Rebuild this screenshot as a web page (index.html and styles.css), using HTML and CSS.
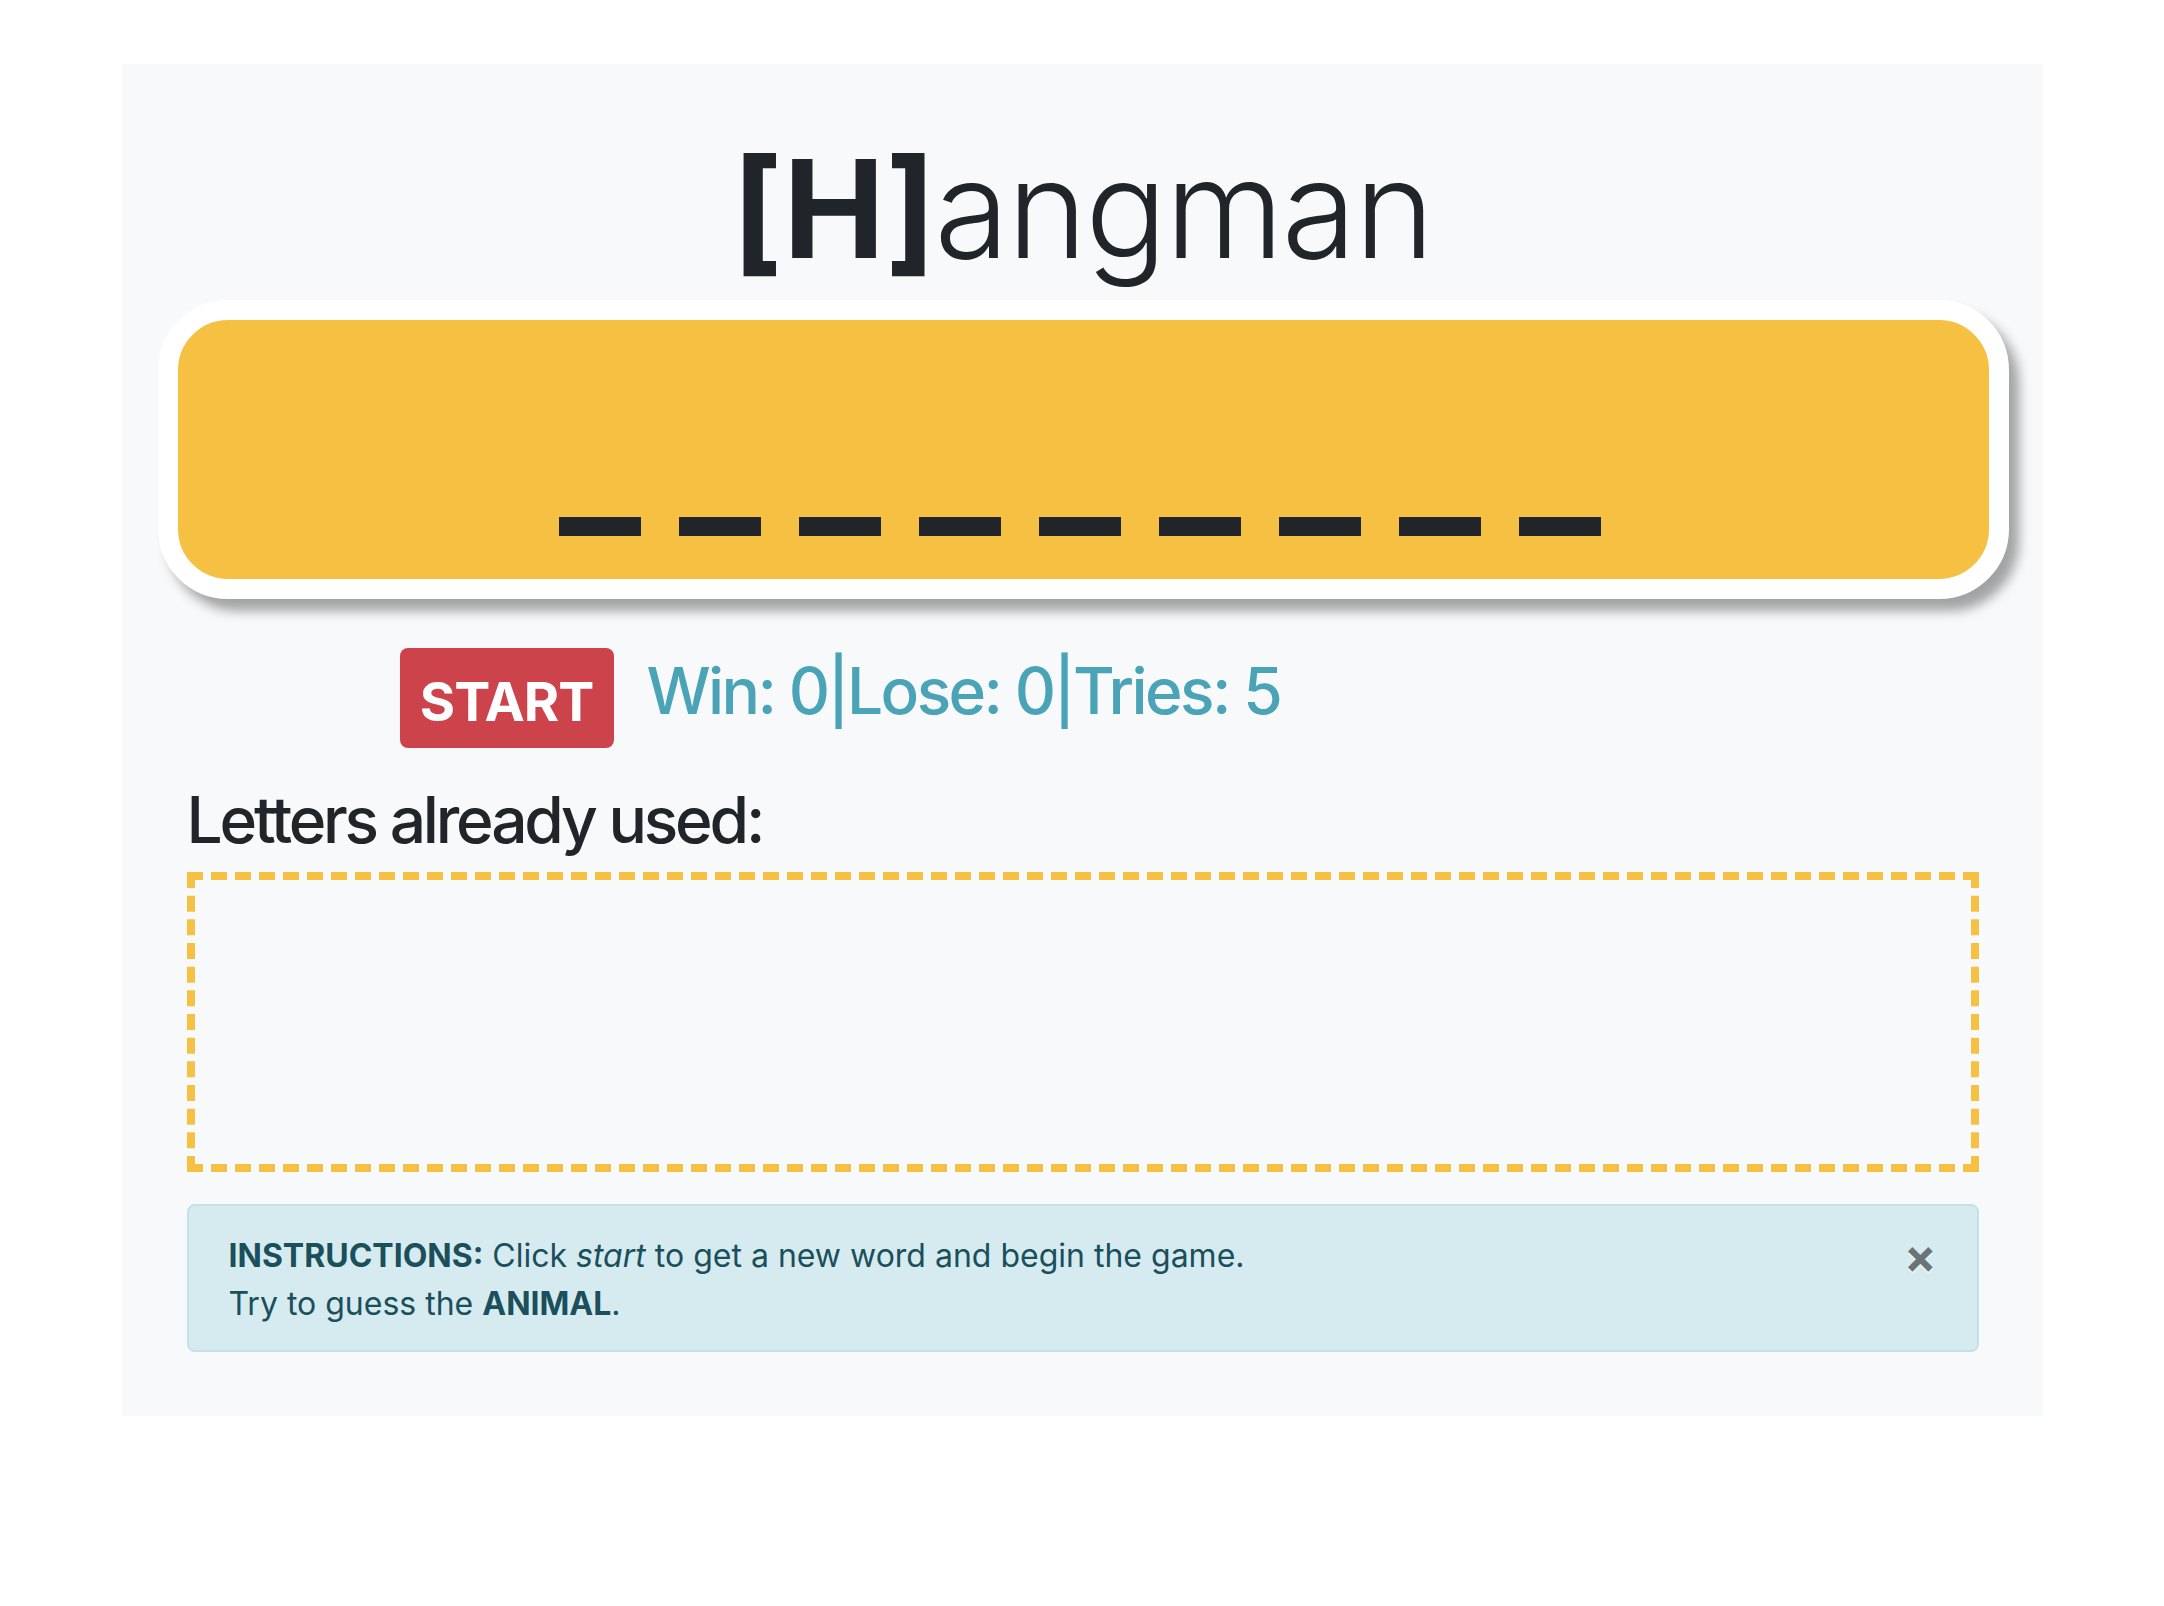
FILE: index.html
```html
<!DOCTYPE html>
<html lang="en">
<head>
<meta charset="utf-8">
<title>Hangman</title>
<link rel="stylesheet" href="styles.css">
</head>
<body>
<main class="container">
  <h1 class="title"><b>[H]</b>angman</h1>
  <div class="word-card">
    <div class="word">
      <span class="blank"></span><span class="blank"></span><span class="blank"></span>
      <span class="blank"></span><span class="blank"></span><span class="blank"></span>
      <span class="blank"></span><span class="blank"></span><span class="blank"></span>
    </div>
  </div>
  <div class="controls">
    <button class="btn-start" type="button">START</button>
    <h2 class="stats">Win: 0|Lose: 0|Tries: 5</h2>
  </div>
  <h2 class="used-title">Letters already used:</h2>
  <div class="used-box"></div>
  <div class="alert">
    <p><strong>INSTRUCTIONS:</strong> Click <em>start</em> to get a new word and begin the game.<br>Try to guess the <strong>ANIMAL</strong>.</p>
    <button class="close" type="button">×</button>
  </div>
</main>
</body>
</html>
```

FILE: styles.css
```css
html, body {
  margin: 0;
  padding: 0;
  background: #ffffff;
}

body {
  font-family: Inter, "Liberation Sans", sans-serif;
  color: #212529;
}

.container {
  width: 1921px;
  margin: 64px auto 0;
  padding: 74px 0 64px;
  background: #f8f9fa;
  box-sizing: border-box;
}

.title {
  margin: 0;
  font-size: 136px;
  line-height: 142px;
  font-weight: 300;
  letter-spacing: -2px;
  text-align: center;
  color: #212529;
}

.title b {
  font-weight: 700;
}

.word-card {
  margin: 20px 34px 0 36px;
  height: 299px;
  box-sizing: border-box;
  border: 20px solid #ffffff;
  border-radius: 70px;
  background: #f6c143;
  box-shadow: 10px 12px 12px rgba(0, 0, 0, 0.35);
  display: flex;
  justify-content: center;
  align-items: flex-end;
  padding-bottom: 43px;
}

.word {
  display: flex;
  gap: 38px;
  margin-right: 6px;
}

.blank {
  width: 82px;
  height: 19px;
  background: #212529;
}

.controls {
  display: flex;
  align-items: flex-start;
  gap: 33px;
  margin-top: 49px;
  padding-left: 278px;
}

.btn-start {
  width: 214px;
  height: 100px;
  border: 0;
  border-radius: 8px;
  background: #cd434b;
  color: #ffffff;
  font-family: Inter, "Liberation Sans", sans-serif;
  font-size: 54px;
  font-weight: 700;
  letter-spacing: -1px;
  padding: 0;
  padding-top: 6px;
}

.stats {
  margin: 5px 0 0;
  font-size: 64px;
  line-height: 1.2;
  font-weight: 500;
  letter-spacing: -2.6px;
  color: #4aa3b7;
}

.used-title {
  margin: 34px 0 0 65px;
  font-size: 64px;
  line-height: 1.2;
  font-weight: 500;
  letter-spacing: -3.2px;
  color: #212529;
}

.used-box {
  margin: 13px 64px 0 65px;
  height: 300px;
  box-sizing: border-box;
  border: 8px dashed #f6c142;
}

.alert {
  position: relative;
  margin: 32px 64px 0 65px;
  padding: 26px 40px 22px;
  background: #d6ebf0;
  border: 2px solid #c2e2e8;
  border-radius: 8px;
  color: #1a4f5b;
  font-size: 32px;
  line-height: 48px;
}

.alert p {
  margin: 0;
}

.alert strong {
  font-weight: 700;
}

.close {
  position: absolute;
  top: 0;
  right: 0;
  padding: 26px 40px 22px;
  border: 0;
  background: transparent;
  font-family: Inter, "Liberation Sans", sans-serif;
  font-size: 48px;
  font-weight: 700;
  line-height: 1;
  color: #000000;
  text-shadow: 0 2px 0 #ffffff;
  opacity: 0.5;
}
```
